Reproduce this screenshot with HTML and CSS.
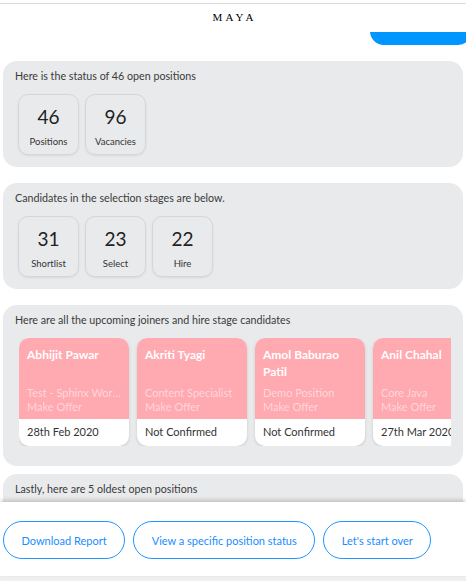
FILE: index.html
```html
<!DOCTYPE html>
<html>
<head>
<meta charset="utf-8">
<link rel="stylesheet" href="styles.css">
</head>
<body>
<div class="app">
  <header class="title">MAYA</header>
  <main class="chat">
    <div class="feed">
      <div class="user-row"><div class="user-bubble">Position status</div></div>

      <section class="bubble">
        <p class="msg">Here is the status of 46 open positions</p>
        <div class="stats">
          <div class="stat"><span class="num">46</span><span class="lbl">Positions</span></div>
          <div class="stat"><span class="num">96</span><span class="lbl">Vacancies</span></div>
        </div>
      </section>

      <section class="bubble">
        <p class="msg">Candidates in the selection stages are below.</p>
        <div class="stats">
          <div class="stat"><span class="num">31</span><span class="lbl">Shortlist</span></div>
          <div class="stat"><span class="num">23</span><span class="lbl">Select</span></div>
          <div class="stat"><span class="num">22</span><span class="lbl">Hire</span></div>
        </div>
      </section>

      <section class="bubble bubble-cards">
        <p class="msg">Here are all the upcoming joiners and hire stage candidates</p>
        <div class="cards">
          <div class="card">
            <div class="card-top">
              <div class="name">Abhijit Pawar</div>
              <div class="meta"><div class="ell">Test - Sphinx Workflow Position</div><div>Make Offer</div></div>
            </div>
            <div class="card-date">28th Feb 2020</div>
          </div>
          <div class="card">
            <div class="card-top">
              <div class="name">Akriti Tyagi</div>
              <div class="meta"><div class="ell">Content Specialist</div><div>Make Offer</div></div>
            </div>
            <div class="card-date">Not Confirmed</div>
          </div>
          <div class="card">
            <div class="card-top">
              <div class="name">Amol Baburao Patil</div>
              <div class="meta"><div class="ell">Demo Position</div><div>Make Offer</div></div>
            </div>
            <div class="card-date">Not Confirmed</div>
          </div>
          <div class="card">
            <div class="card-top">
              <div class="name">Anil Chahal</div>
              <div class="meta"><div class="ell">Core Java</div><div>Make Offer</div></div>
            </div>
            <div class="card-date">27th Mar 2020</div>
          </div>
        </div>
      </section>

      <section class="bubble">
        <p class="msg">Lastly, here are 5 oldest open positions</p>
        <div class="stats">
          <div class="stat"><span class="num">5</span><span class="lbl">Positions</span></div>
        </div>
      </section>
    </div>
  </main>
  <footer class="actions">
    <button class="pill">Download Report</button>
    <button class="pill">View a specific position status</button>
    <button class="pill">Let's start over</button>
  </footer>
  <div class="strip"></div>
</div>
</body>
</html>
```

FILE: styles.css
```css
* { box-sizing: border-box; }
html, body { margin: 0; padding: 0; background: #fff; }
body { font-family: Lato, "Open Sans", sans-serif; color: #333; }

.app {
  width: 466px;
  height: 581px;
  padding-top: 3px;
  display: flex;
  flex-direction: column;
  overflow: hidden;
}

.title {
  border-top: 1px solid #dcdcdc;
  height: 29px;
  padding-top: 7px;
  text-align: center;
  font-family: "Liberation Serif", serif;
  font-size: 11px;
  line-height: 13px;
  letter-spacing: 3.2px;
  color: #000;
  padding-left: 3px;
}

.chat {
  height: 470px;
  overflow: hidden;
  position: relative;
  flex: none;
}

.feed { margin-top: -15px; }

.user-row { display: flex; justify-content: flex-end; margin-right: -6px; }
.user-bubble {
  background: #0096ff;
  color: #fff;
  font-size: 12px;
  height: 28px;
  line-height: 20px;
  padding: 0 18px 0 18px;
  border-radius: 14px;
  width: 102px;
  white-space: nowrap;
}

.bubble {
  background: #e9eaec;
  border-radius: 14px;
  margin: 16px 3px 0 3px;
  padding: 8px 12px 12px 12px;
}

.msg {
  margin: 0;
  font-size: 10.7px;
  line-height: 14px;
  color: #3a3a3a;
}

.stats {
  display: flex;
  gap: 6px;
  margin: 11px 0 0 3px;
}
.stat {
  width: 61px;
  height: 61px;
  border: 1px solid #d6d6d6;
  border-radius: 10px;
  box-shadow: 0 1px 2px rgba(0,0,0,0.08);
  display: flex;
  flex-direction: column;
  align-items: center;
  padding-top: 10px;
}
.num { font-size: 19px; line-height: 24px; color: #222; font-weight: 400; }
.lbl { font-size: 9.5px; line-height: 12px; margin-top: 7px; color: #333; }

.bubble-cards { padding-bottom: 20px; }
.cards {
  display: flex;
  gap: 8px;
  margin: 11px 0 0 4px;
  overflow: hidden;
}
.card {
  flex: none;
  width: 110px;
  height: 108px;
  border-radius: 10px;
  overflow: hidden;
  background: #fff;
  box-shadow: 0 1px 3px rgba(0,0,0,0.15);
  display: flex;
  flex-direction: column;
}
.card-top {
  background: #ffa9b1;
  height: 81px;
  padding: 8px 8px 5px 8px;
  display: flex;
  flex-direction: column;
  justify-content: space-between;
}
.name {
  color: #fff;
  font-weight: 700;
  font-size: 12px;
  line-height: 17px;
}
.meta {
  color: #ffd6da;
  font-size: 11px;
  line-height: 14px;
}
.ell { white-space: nowrap; overflow: hidden; text-overflow: ellipsis; }
.card-date {
  flex: 1;
  font-size: 11px;
  line-height: 14px;
  padding: 6px 8px 0 8px;
  color: #333;
  white-space: nowrap;
}

.bubble:last-child { margin-top: 8px; }

.actions {
  flex: none;
  height: 74px;
  background: #fff;
  box-shadow: 0 -2px 4px rgba(0,0,0,0.18);
  display: flex;
  gap: 8px;
  padding: 19px 3px 0 3px;
  position: relative;
}
.pill {
  height: 38px;
  border: 1px solid #1f95ff;
  border-radius: 19px;
  background: #fff;
  color: #1a8cff;
  font-family: Lato, "Open Sans", sans-serif;
  font-size: 11px;
  padding: 0 17.5px;
}
.strip { flex: 1; background: #efefef; }
```
